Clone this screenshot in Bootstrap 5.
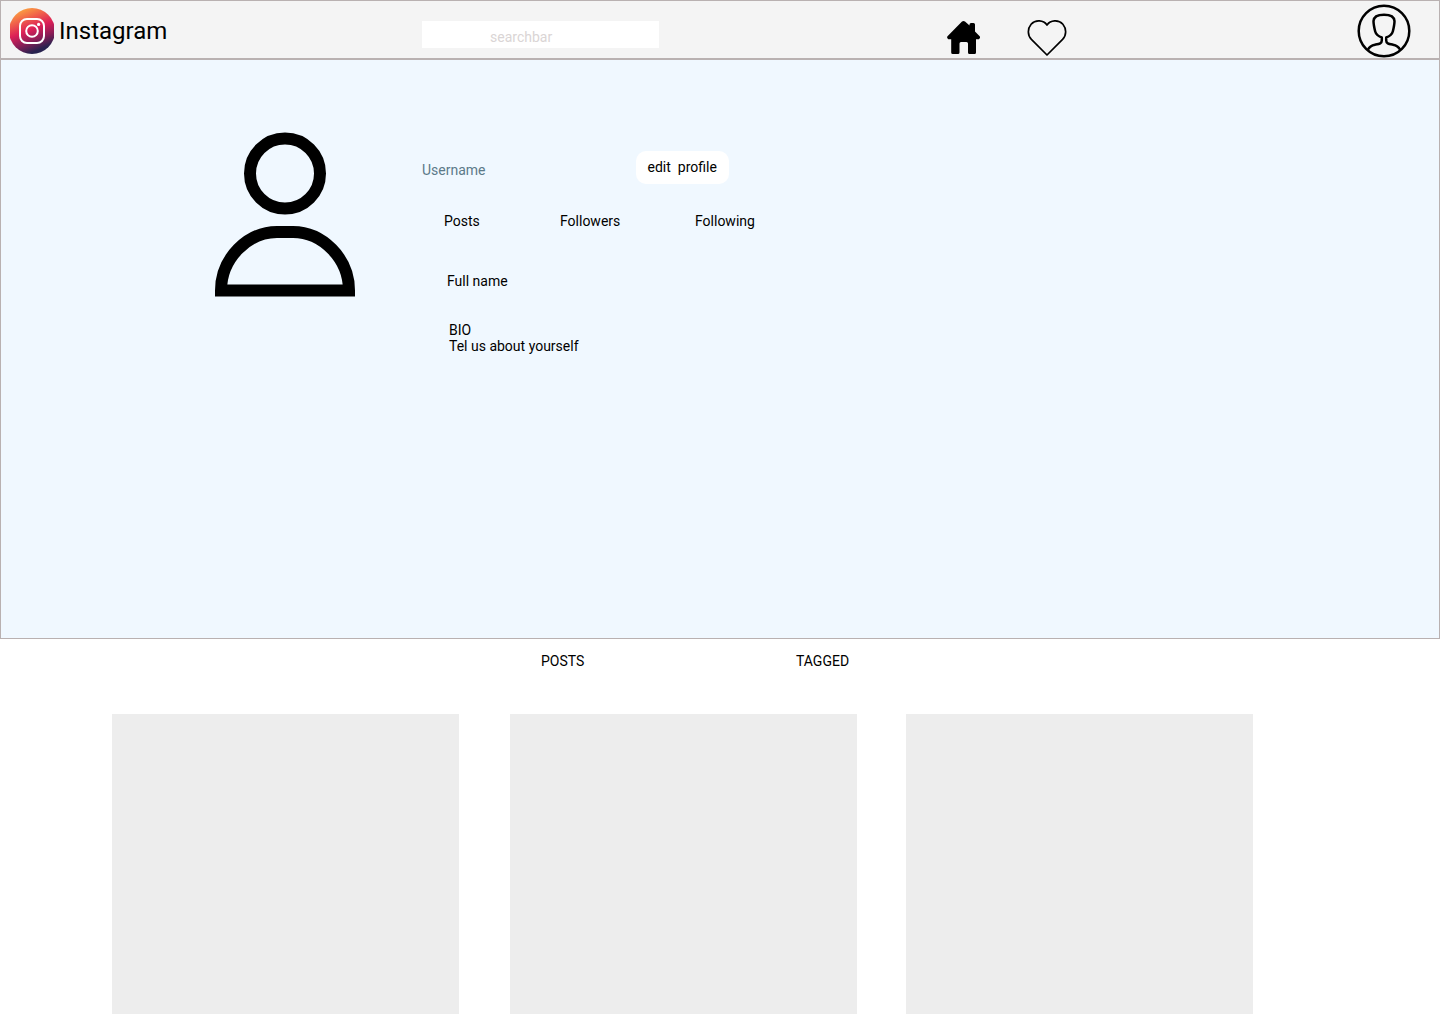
<!DOCTYPE html>
<html lang="en">
<head>
<meta charset="utf-8">
<meta name="viewport" content="width=device-width, initial-scale=1">
<title>Instagram</title>
<link href="https://cdn.jsdelivr.net/npm/bootstrap@5.3.0/dist/css/bootstrap.min.css" rel="stylesheet">
<style>
body { font-family: Roboto, "Liberation Sans", sans-serif; font-size: 14px; line-height: 16px; color: #000; background: #fff; }
svg { display: block; flex: none; }
a { color: inherit; text-decoration: none; }
.framed { border: 1px solid #b9b1b1; }
.topbar { display: grid; grid-template-columns: 421fr 525fr 410fr 82fr; height: 59px; background: #f4f4f4; }
.brand-link { gap: 5px; padding: 7px 0 0 9px; font-size: 24px; line-height: 28px; }
.search-field { width: 237px; height: 27px; margin-top: 20px; padding: 5px 8px 1px 68px; border: 0; border-radius: 0; background: #fff; font-size: 14px; line-height: 16px; min-height: 0; }
.search-field::placeholder { color: #dad5d5; opacity: 1; }
.main-links { gap: 46px; padding-top: 19px; }
.account-link { padding-top: 3px; }
.profile { display: grid; grid-template-columns: 421fr 1017fr; min-height: 580px; background: #f0f8ff; }
.portrait { padding: 72px 66px 0 0; }
.details { padding-top: 91px; }
.name-row { gap: 150px; }
.username { color: #5c7a89; padding-top: 4px; }
.edit-btn { height: 33px; padding: 0 12px 1px; border: 0; border-radius: 10px; background: #fff; color: #000; font-size: 14px; line-height: 16px; }
.stats { padding-left: 22px; margin-top: 29px; }
.stats a:nth-child(1) { width: 116px; }
.stats a:nth-child(2) { width: 135px; }
.full-name { padding-left: 25px; margin-top: 44px; }
.bio { padding-left: 27px; margin-top: 33px; }
.feed-tabs { display: grid; grid-template-columns: 541fr 255fr 644fr; margin-top: 14px; }
.feed-tabs a:first-child { grid-column: 2; }
.gallery { display: grid; grid-template-columns: 112fr 347fr 51fr 347fr 49fr 347fr 187fr; margin-top: 45px; }
.tile { height: 300px; background: #ededed; }
.tile:nth-child(1) { grid-column: 2; }
.tile:nth-child(2) { grid-column: 4; }
.tile:nth-child(3) { grid-column: 6; }
</style>
</head>
<body>
<header class="topbar framed">
  <a href="#" class="brand-link d-flex align-items-center align-self-start">
    <svg width="44" height="46" viewBox="0 0 44 46" aria-hidden="true">
      <defs>
        <linearGradient id="sunset" x1="0.25" y1="0" x2="0.65" y2="1">
          <stop offset="0" stop-color="#fdaa40"/>
          <stop offset="0.25" stop-color="#f0604a"/>
          <stop offset="0.48" stop-color="#dc2057"/>
          <stop offset="0.7" stop-color="#8e1d57"/>
          <stop offset="0.92" stop-color="#28224f"/>
        </linearGradient>
      </defs>
      <circle cx="22" cy="23" r="23" fill="url(#sunset)"/>
      <g fill="none" stroke="#fff" stroke-width="2">
        <rect x="10" y="11" width="24" height="24" rx="7"/>
        <circle cx="22" cy="23" r="5.8"/>
      </g>
      <circle cx="28.6" cy="16.4" r="1.6" fill="#fff"/>
    </svg>
    <span>Instagram</span>
  </a>
  <form role="search">
    <input type="search" class="search-field form-control shadow-none" placeholder="searchbar" aria-label="Search">
  </form>
  <nav class="main-links d-flex align-items-start" aria-label="Main">
    <a href="#" aria-label="Home">
      <svg width="34" height="35" viewBox="0 0 34 35"><path fill="#000" d="M15 1.600Q16.500.3 18 1.600L22.500 5.600V4.500Q22.500 3 24 3H26.500Q28 3 28 4.500V11.500L32.700 16.200Q33.400 17.200 32.700 18.300L32 19.200H29V32.500Q29 34 27.500 34H22.500Q21 34 21 32.500V23.500Q21 22 19.500 22H14Q12.500 22 12.500 23.500V32.500Q12.500 34 11 34H5.700Q4.200 34 4.200 32.500V19.200H1.300L.4 18.300Q-.2 17.300.5 16.200Z"/></svg>
    </a>
    <a href="#" aria-label="Likes">
      <svg width="40" height="37" viewBox="0 0 40 37"><path fill="none" stroke="#000" stroke-width="1.700" stroke-linejoin="round" d="M20 5C16.500 0 8.500-.6 4.100 4.200C.4 8.700.4 15.200 4.400 19.400L20 35L35.600 19.400C39.600 15.200 39.600 8.700 35.900 4.200C31.500-.6 23.500 0 20 5Z"/></svg>
    </a>
  </nav>
  <a href="#" class="account-link" aria-label="Account">
    <svg width="54" height="54" viewBox="0 0 54 54"><g fill="none" stroke="#000" stroke-width="2.500" stroke-linecap="round" stroke-linejoin="round"><circle cx="27" cy="27" r="25.300"/><path d="M11 45.500C12.500 42.500 15 41.300 18 40.700C22.500 39.800 24.800 39.500 24.800 36.500V33.500C21.500 32.300 19 30.500 18.200 27.500C17.200 23.500 16.500 20 16.500 17C16.800 12 21.500 10.700 27 10.700S37.200 12 37.500 17C37.500 20 36.800 23.500 35.800 27.500C35 30.500 32.500 32.300 29.200 33.500V36.500C29.200 39.500 31.500 39.800 36 40.700C39 41.300 41.500 42.500 43 45.500"/></g></svg>
  </a>
</header>

<main>
  <section class="profile framed">
    <div class="portrait d-flex justify-content-end align-items-start">
      <svg width="141" height="165" viewBox="0 0 141 165" role="img" aria-label="Profile picture"><g fill="none" stroke="#000" stroke-width="12"><circle cx="70" cy="41.500" r="35"/><path d="M6 158.500C6 126 33 100 62 100H78C107 100 134 126 134 158.500Z"/></g></svg>
    </div>
    <div class="details">
      <div class="name-row d-flex align-items-center">
        <span class="username">Username</span>
        <button type="button" class="edit-btn">edit&nbsp; profile</button>
      </div>
      <div class="stats d-flex">
        <a href="#">Posts</a>
        <a href="#">Followers</a>
        <a href="#">Following</a>
      </div>
      <div class="full-name">Full name</div>
      <div class="bio">
        <div>BIO</div>
        <div>Tel us about yourself</div>
      </div>
    </div>
  </section>

  <nav class="feed-tabs" aria-label="Feed">
    <a href="#">POSTS</a>
    <a href="#">TAGGED</a>
  </nav>
  <section class="gallery" aria-label="Posts">
    <div class="tile"></div>
    <div class="tile"></div>
    <div class="tile"></div>
  </section>
</main>
<script src="https://cdn.jsdelivr.net/npm/bootstrap@5.3.0/dist/js/bootstrap.bundle.min.js"></script>
</body>
</html>
